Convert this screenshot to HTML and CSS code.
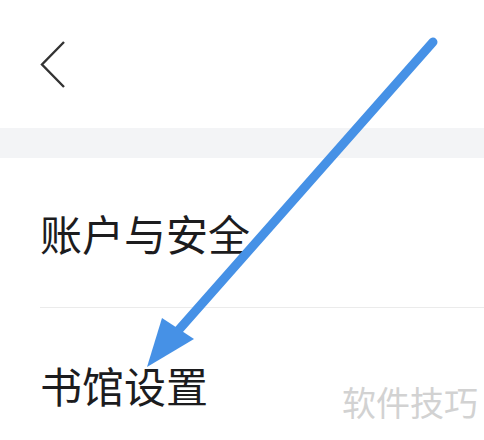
FILE: index.html
```html
<!DOCTYPE html>
<html lang="zh-CN">
<head>
  <meta charset="UTF-8">
  <meta name="viewport" content="width=device-width, initial-scale=1">
  <title>设置</title>
  <link rel="stylesheet" href="styles.css">
</head>
<body>

  <div class="page">
    <header class="topbar">
      <svg class="back" width="28" height="50" viewBox="0 0 28 50">
        <polyline points="25,3 3,25.5 25,48" fill="none" stroke="#333" stroke-width="2.4" stroke-linejoin="miter"/>
      </svg>
    </header>

    <div class="band"></div>

    <div class="menu">
      <div class="row">账户与安全</div>
      <div class="row last">书馆设置</div>
    </div>

    <!-- annotation drawn over the screenshot -->
    <svg class="arrow" width="484" height="440" viewBox="0 0 484 440">
      <line x1="433" y1="42" x2="176" y2="333" stroke="#4691e6" stroke-width="9" stroke-linecap="round"/>
      <polygon points="147,367 162,318 194,339" fill="#4691e6"/>
    </svg>

    <div class="watermark">软件技巧</div>
  </div>

</body>
</html>
```

FILE: styles.css
```css
body {
  margin: 0;
  background: #fff;
  font-family: "Noto Sans CJK SC", "Noto Sans", sans-serif;
  color: #1c1c1e;
}
.page {
  position: relative;
  width: 484px;
  height: 440px;
  overflow: hidden;
}
.topbar {
  height: 128px;
  display: flex;
  align-items: center;
  padding-left: 39px;
}
.back {
  display: block;
}
.band {
  height: 30px;
  background: #f3f4f6;
}
.menu {
  padding-left: 40px;
}
.row {
  height: 149px;
  display: flex;
  align-items: center;
  font-size: 42px;
  line-height: 1;
  border-bottom: 1px solid #ebebeb;
}
.row.last {
  height: 154px;
  border-bottom: none;
}
.arrow {
  position: absolute;
  left: 0;
  top: 0;
}
.watermark {
  position: absolute;
  left: 342px;
  top: 385px;
  font-size: 34px;
  line-height: 1;
  color: #d2d2d2;
}
```
